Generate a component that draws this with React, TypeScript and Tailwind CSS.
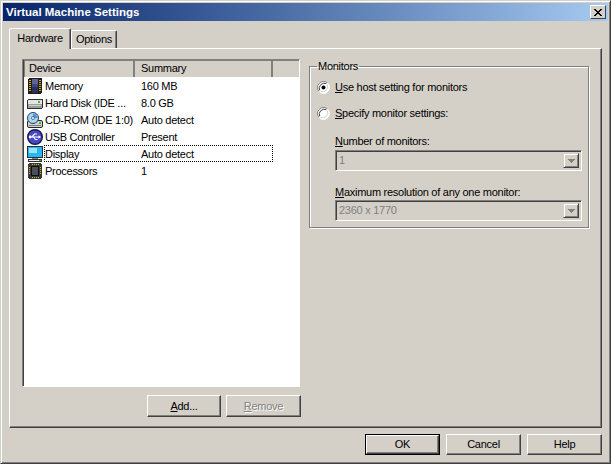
const devices = [
  { name: "Memory", summary: "160 MB", icon: "memory" },
  { name: "Hard Disk (IDE ...", summary: "8.0 GB", icon: "disk" },
  { name: "CD-ROM (IDE 1:0)", summary: "Auto detect", icon: "cd" },
  { name: "USB Controller", summary: "Present", icon: "usb" },
  { name: "Display", summary: "Auto detect", icon: "display", focused: true },
  { name: "Processors", summary: "1", icon: "cpu" },
];

const DeviceIcon = ({ type }: { type: string }) => {
  if (type === "memory") {
    return (
      <svg width="16" height="16" viewBox="0 0 16 16" shapeRendering="crispEdges">
        <rect x="1" y="0" width="14" height="16" rx="2" fill="#1c1c1c" />
        <path d="M2 2h2v1H2zM2 4h2v1H2zM2 6h2v1H2zM2 8h2v1H2zM2 10h2v1H2zM2 12h2v1H2zM12 2h2v1h-2zM12 4h2v1h-2zM12 6h2v1h-2zM12 8h2v1h-2zM12 10h2v1h-2zM12 12h2v1h-2z" fill="#e0a828" />
        <rect x="5" y="1" width="6" height="14" fill="#2c3060" />
        <rect x="5" y="1" width="6" height="5" fill="#5c6498" />
        <rect x="5" y="6" width="6" height="3" fill="#404880" />
      </svg>
    );
  }
  if (type === "disk") {
    return (
      <svg width="16" height="16" viewBox="0 0 16 16" shapeRendering="crispEdges">
        <rect x="0" y="4" width="16" height="10" rx="2" fill="#303030" />
        <rect x="1" y="5" width="14" height="4" fill="#e4e4e4" />
        <rect x="1" y="9" width="14" height="4" fill="#9c9c9c" />
        <rect x="2" y="10" width="12" height="1" fill="#d0d0d0" />
        <rect x="11" y="6" width="2" height="2" fill="#30c030" />
      </svg>
    );
  }
  if (type === "cd") {
    return (
      <svg width="16" height="16" viewBox="0 0 16 16">
        <rect x="0.5" y="8.5" width="15" height="7" rx="1.500" fill="#d0d0d0" stroke="#282828" />
        <rect x="2" y="13" width="12" height="1" fill="#808080" />
        <circle cx="6" cy="6" r="5.500" fill="#a8d8f0" stroke="#303c68" />
        <path d="M6 1.500a4.500 4.500 0 0 1 4.500 4.500H6z" fill="#4c98d0" />
        <circle cx="6" cy="6" r="1.500" fill="#fff" stroke="#303c68" strokeWidth="0.7" />
        <rect x="12" y="10" width="2" height="2" fill="#30c030" />
      </svg>
    );
  }
  if (type === "usb") {
    return (
      <svg width="16" height="16" viewBox="0 0 16 16">
        <circle cx="8" cy="8" r="7.300" fill="#4848c8" stroke="#181848" strokeWidth="1.400" />
        <path d="M3 8h9M5 8l2.500-3h2.500M6.500 8l2 2.500h2" fill="none" stroke="#fff" strokeWidth="1.200" />
        <path d="M14 8l-2.500-1.800v3.600z" fill="#fff" />
        <circle cx="3.200" cy="8" r="1.400" fill="#fff" />
      </svg>
    );
  }
  if (type === "display") {
    return (
      <svg width="16" height="16" viewBox="0 0 16 16" shapeRendering="crispEdges">
        <rect x="0" y="0" width="16" height="12" fill="#282c38" />
        <rect x="1" y="1" width="14" height="10" fill="#28b8f0" />
        <rect x="2" y="2" width="8" height="5" fill="#98e4fc" />
        <rect x="5" y="12" width="6" height="1" fill="#808080" />
        <rect x="1" y="13" width="14" height="3" fill="#303030" />
        <rect x="2" y="14" width="12" height="1" fill="#e8e8e8" />
        <rect x="12" y="14" width="2" height="1" fill="#30c030" />
      </svg>
    );
  }
  return (
    <svg width="16" height="16" viewBox="0 0 16 16" shapeRendering="crispEdges">
      <rect x="1" y="0" width="14" height="16" rx="3" fill="#383838" />
      <path d="M2 4h1v1H2zM2 6h1v1H2zM2 8h1v1H2zM2 10h1v1H2zM13 4h1v1h-1zM13 6h1v1h-1zM13 8h1v1h-1zM13 10h1v1h-1zM5 1h1v1H5zM7 1h1v1H7zM9 1h1v1H9zM11 1h1v1h-1zM5 14h1v1H5zM7 14h1v1H7zM9 14h1v1H9zM11 14h1v1h-1z" fill="#e0b030" />
      <rect x="4" y="3" width="8" height="10" fill="#101010" />
      <rect x="5" y="4" width="6" height="8" fill="#4a4e58" />
    </svg>
  );
};

const Radio = ({ checked }: { checked?: boolean }) => (
  <svg width="13" height="13" viewBox="0 0 13 13" className="shrink-0">
    <circle cx="6.500" cy="6.500" r="6" fill="#fff" />
    <path d="M1.800 10.200A6 6 0 0 1 10.200 1.800" fill="none" stroke="#808080" />
    <path d="M2.700 9.300A5 5 0 0 1 9.300 2.700" fill="none" stroke="#404040" />
    <path d="M11.200 2.800A6 6 0 0 1 2.800 11.200" fill="none" stroke="#ffffff" />
    <path d="M10.300 3.700A5 5 0 0 1 3.700 10.300" fill="none" stroke="#d4d0c8" />
    {checked && <circle cx="6.500" cy="6.500" r="2" fill="#000" />}
  </svg>
);

const WinButton = ({
  children,
  disabled,
  isDefault,
  className,
}: {
  children: React.ReactNode;
  disabled?: boolean;
  isDefault?: boolean;
  className: string;
}) => (
  <div className={`${className} ${isDefault ? "border border-black" : ""}`}>
    <div
      className={`flex h-full items-center justify-center border border-t-white border-l-white border-r-[#404040] border-b-[#404040] shadow-[inset_-1px_-1px_0_#808080] ${
        disabled ? "text-[#808080] [text-shadow:1px_1px_0_#fff]" : "text-black"
      }`}
    >
      {children}
    </div>
  </div>
);

const Combo = ({ value }: { value: string }) => (
  <div className="flex h-[21px] w-[247px] items-stretch border border-t-[#808080] border-l-[#808080] border-r-white border-b-white shadow-[inset_1px_1px_0_#404040,inset_-1px_-1px_0_#d4d0c8] p-[2px]">
    <span className="flex-1 pl-[1px] leading-[15px] text-[#808080]">{value}</span>
    <div className="flex w-[16px] items-center justify-center border border-t-[#d4d0c8] border-l-[#d4d0c8] border-r-[#404040] border-b-[#404040] shadow-[inset_1px_1px_0_#fff,inset_-1px_-1px_0_#808080]">
      <svg width="7" height="4" viewBox="0 0 7 4" shapeRendering="crispEdges">
        <path d="M0 0h7v1H0zM1 1h5v1H1zM2 2h3v1H2zM3 3h1v1H3z" fill="#808080" />
      </svg>
    </div>
  </div>
);

export default function App() {
  return (
    <div className="flex h-[464px] w-[611px] flex-col overflow-hidden border border-t-[#d4d0c8] border-l-[#d4d0c8] border-r-[#404040] border-b-[#404040] bg-[#d4d0c8] p-[2px] font-['Liberation_Sans',sans-serif] text-[11px] tracking-[-0.27px] text-black shadow-[inset_1px_1px_0_#fff,inset_-1px_-1px_0_#808080]">
      <div className="flex h-[18px] shrink-0 items-center justify-between bg-gradient-to-r from-[#0a246a] to-[#a6caf0] pl-[2px] pr-[2px]">
        <span className="pl-[1px] pt-[1px] text-[11.500px] font-bold tracking-[0px] text-white">Virtual Machine Settings</span>
        <div className="flex h-[14px] w-[16px] items-center justify-center border border-t-white border-l-white border-r-[#404040] border-b-[#404040] bg-[#d4d0c8]">
          <svg width="8" height="7" viewBox="0 0 8 7" shapeRendering="crispEdges">
            <path d="M0 0h2v1h1v1h2V1h1V0h2v1H7v1H6v1H5v1h1v1h1v1h1v1H6V6H5V5H3v1H2v1H0V6h1V5h1V4h1V3H2V2H1V1H0z" fill="#000" />
          </svg>
        </div>
      </div>

      <div className="flex flex-1 flex-col px-[6px]">
        <div className="mt-[7px] flex h-[20px] items-end">
          <div className="z-10 -mb-[1px] flex h-[21px] w-[62px] items-center justify-center rounded-t-[2px] border border-b-0 border-t-white border-l-white border-r-[#404040] bg-[#d4d0c8] pb-[1px] shadow-[inset_-1px_0_0_#808080]">
            Hardware
          </div>
          <div className="flex h-[18px] w-[46px] items-center justify-center rounded-t-[2px] border border-b-0 border-t-white border-l-white border-r-[#404040] shadow-[inset_-1px_0_0_#808080]">
            Options
          </div>
        </div>

        <div className="flex h-[380px] w-[593px] gap-[8px] border border-t-white border-l-white border-r-[#404040] border-b-[#404040] pl-[12px] pt-[10px] shadow-[inset_-1px_-1px_0_#808080]">
          <div className="flex w-[279px] flex-col">
            <div className="h-[328px] w-[278px] border border-t-[#808080] border-l-[#808080] border-r-white border-b-white bg-white shadow-[inset_1px_1px_0_#404040]">
              <div className="ml-[1px] flex h-[17px] bg-[#d4d0c8]">
                <div className="flex w-[111px] items-center border-r-2 border-r-[#808080] pl-[5px] shadow-[inset_1px_1px_0_#808080]">
                  Device
                </div>
                <div className="flex w-[138px] items-center border-r-2 border-r-[#808080] pl-[6px] shadow-[inset_0_1px_0_#808080]">
                  Summary
                </div>
                <div className="flex-1 shadow-[inset_0_1px_0_#808080]" />
              </div>
              {devices.map((d) => (
                <div key={d.name} className="ml-[1px] flex h-[17px] items-center">
                  <div className="ml-[3px] w-[17px] shrink-0">
                    <DeviceIcon type={d.icon} />
                  </div>
                  <div
                    className={`flex h-[17px] w-[229px] items-center border border-dotted pt-[1px] ${
                      d.focused ? "border-black" : "border-transparent"
                    }`}
                  >
                    <span className="w-[96px] shrink-0 whitespace-nowrap">{d.name}</span>
                    <span className="whitespace-nowrap">{d.summary}</span>
                  </div>
                </div>
              ))}
            </div>
            <div className="mt-[8px] flex justify-end gap-[5px]">
              <WinButton className="h-[22px] w-[74px]">
                <span>
                  <span className="underline">A</span>dd...
                </span>
              </WinButton>
              <WinButton disabled className="h-[22px] w-[75px]">
                <span>
                  <span className="underline">R</span>emove
                </span>
              </WinButton>
            </div>
          </div>

          <fieldset className="mt-[1px] h-[168px] w-[280px] border border-[#808080] pl-[7px] shadow-[1px_1px_0_#fff,inset_1px_1px_0_#fff]">
            <legend className="px-[1px] leading-[13px]">Monitors</legend>
            <div className="mt-[8px] flex h-[13px] items-center gap-[5px]">
              <Radio checked />
              <span>
                <span className="underline">U</span>se host setting for monitors
              </span>
            </div>
            <div className="mt-[13px] flex h-[13px] items-center gap-[5px]">
              <Radio />
              <span>
                <span className="underline">S</span>pecify monitor settings:
              </span>
            </div>
            <div className="ml-[18px] mt-[15px] flex flex-col">
              <span className="h-[15px] leading-[13px]">
                <span className="underline">N</span>umber of monitors:
              </span>
              <Combo value="1" />
              <span className="mt-[15px] h-[14px] leading-[13px]">
                <span className="underline">M</span>aximum resolution of any one monitor:
              </span>
              <Combo value="2360 x 1770" />
            </div>
          </fieldset>
        </div>

        <div className="mt-[6px] flex w-[593px] justify-end gap-[6px]">
          <WinButton isDefault className="h-[21px] w-[75px]">OK</WinButton>
          <WinButton className="h-[21px] w-[75px]">Cancel</WinButton>
          <WinButton className="h-[21px] w-[75px]">Help</WinButton>
        </div>
      </div>
    </div>
  );
}
